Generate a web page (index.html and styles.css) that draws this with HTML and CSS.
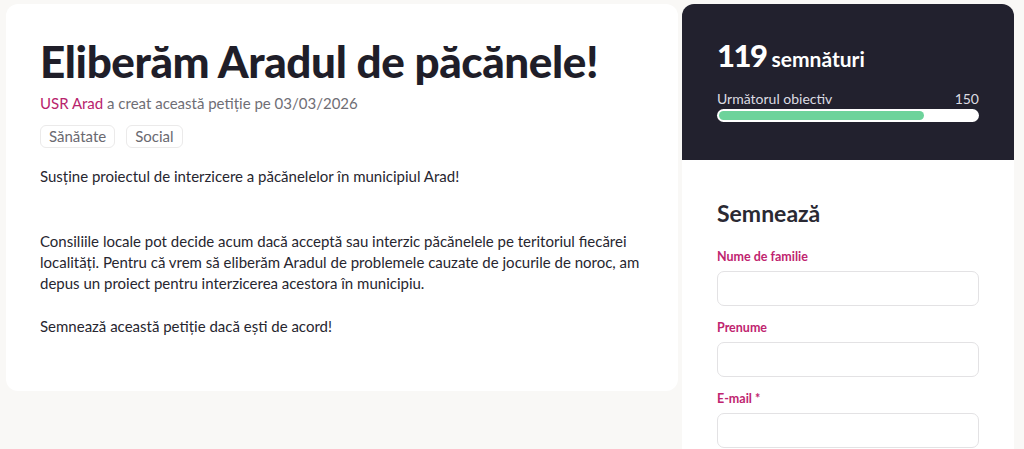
FILE: index.html
```html
<!DOCTYPE html>
<html lang="ro">
<head>
<meta charset="utf-8">
<title>Eliberăm Aradul de păcănele!</title>
<link rel="stylesheet" href="styles.css">
</head>
<body>
<div class="page">
  <main class="petition">
    <h1 class="title">Eliberăm Aradul de păcănele!</h1>
    <p class="meta"><a class="author" href="#">USR Arad</a> a creat această petiție pe 03/03/2026</p>
    <ul class="tags">
      <li class="tag">Sănătate</li>
      <li class="tag">Social</li>
    </ul>
    <div class="body">
      <p>Susține proiectul de interzicere a păcănelelor în municipiul Arad!</p>
      <p class="gap"></p>
      <p>Consiliile locale pot decide acum dacă acceptă sau interzic păcănelele pe teritoriul fiecărei localități. Pentru că vrem să eliberăm Aradul de problemele cauzate de jocurile de noroc, am depus un proiect pentru interzicerea acestora în municipiu.</p>
      <p>Semnează această petiție dacă ești de acord!</p>
    </div>
  </main>
  <aside class="side">
    <section class="stats">
      <div class="count"><strong>119</strong> semnături</div>
      <div class="goal">
        <span>Următorul obiectiv</span>
        <span>150</span>
      </div>
      <div class="bar"><div class="fill" style="width:79.3%"></div></div>
    </section>
    <form class="sign">
      <h2>Semnează</h2>
      <label class="field">
        <span>Nume de familie</span>
        <input type="text">
      </label>
      <label class="field">
        <span>Prenume</span>
        <input type="text">
      </label>
      <label class="field">
        <span>E-mail *</span>
        <input type="email">
      </label>
    </form>
  </aside>
</div>
</body>
</html>
```
FILE: styles.css
```css
* { box-sizing: border-box; }

html, body {
  margin: 0;
  background: #f9f8f6;
  font-family: "Lato", "Noto Sans", sans-serif;
  color: #22212c;
  overflow: hidden;
}

.page {
  display: flex;
  align-items: flex-start;
  padding: 4px 10px 0 6px;
  gap: 4px;
}

.petition {
  flex: 1;
  background: #fff;
  border-radius: 12px;
  padding: 30px 34px 38px;
  height: 387px;
}

.title {
  margin: 0;
  font-size: 44px;
  font-weight: 900;
  line-height: 54px;
  letter-spacing: -0.4px;
  color: #1f1e29;
}

.meta {
  margin: 4px 0 0;
  font-size: 15px;
  line-height: 22px;
  color: #6f6e75;
}

.author {
  color: #b8236d;
  text-decoration: none;
}

.tags {
  list-style: none;
  margin: 11px 0 0;
  padding: 0;
  display: flex;
  gap: 11px;
}

.tag {
  border: 1px solid #ebeaea;
  border-radius: 6px;
  padding: 0 8px;
  font-size: 15px;
  line-height: 21px;
  color: #6a6970;
}

.body {
  display: flex;
  flex-direction: column;
  margin-top: 18px;
  font-size: 15px;
  line-height: 21px;
  color: #27262f;
}

.body p {
  margin: 0 0 22px;
}

.body .gap {
  height: 0;
}

.side {
  width: 332px;
  flex: none;
}

.stats {
  background: #22212e;
  color: #fff;
  border-radius: 12px 12px 0 0;
  padding: 34px 35px 36px;
  height: 156px;
}

.count {
  font-size: 21px;
  font-weight: 700;
  line-height: 34px;
}

.count strong {
  font-size: 31px;
  font-weight: 900;
  letter-spacing: -1.5px;
}

.goal {
  display: flex;
  justify-content: space-between;
  margin-top: 14px;
  font-size: 14px;
  line-height: 18px;
  color: #dcdce2;
}

.bar {
  height: 13px;
  margin-top: 1px;
  background: #fff;
  border-radius: 7px;
  padding: 2px;
}

.fill {
  height: 100%;
  background: #6dd39b;
  border-radius: 5px;
}

.sign {
  background: #fff;
  padding: 38px 35px 0;
  height: 300px;
}

.sign h2 {
  margin: 0 0 21px;
  font-size: 23px;
  font-weight: 700;
  line-height: 30px;
  color: #2a2933;
}

.field {
  display: block;
  margin-bottom: 14px;
}

.field span {
  display: block;
  font-size: 12.5px;
  font-weight: 700;
  color: #c0246f;
  line-height: 16px;
  margin-bottom: 6px;
}

.field input {
  display: block;
  width: 100%;
  height: 35px;
  border: 1px solid #e3e2e4;
  border-radius: 7px;
  background: #fff;
  font: inherit;
}
```
